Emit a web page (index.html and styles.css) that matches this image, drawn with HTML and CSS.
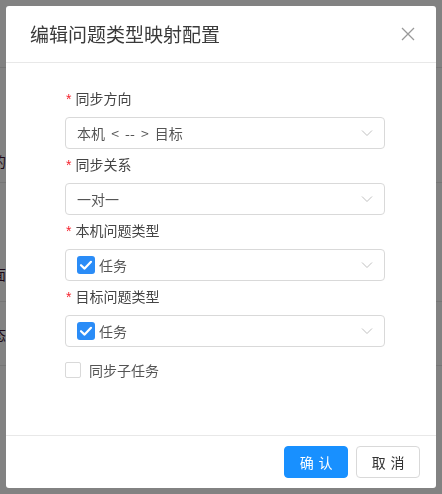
FILE: index.html
```html
<!DOCTYPE html>
<html lang="zh-CN">
<head>
<meta charset="utf-8">
<title>编辑问题类型映射配置</title>
<link rel="stylesheet" href="styles.css">
</head>
<body>
<div class="page">
  <div class="row r1"></div>
  <div class="row r2"><span class="cell">同步的</span></div>
  <div class="row r3"><span class="cell">页面</span></div>
  <div class="row r4"><span class="cell">状态</span></div>
  <div class="row r5"></div>
</div>
<div class="mask">
  <div class="modal">
    <div class="modal-header">
      <div class="title">编辑问题类型映射配置</div>
      <button class="close" type="button" aria-label="关闭">
        <svg width="14" height="14" viewBox="0 0 14 14"><path d="M1 1 L13 13 M13 1 L1 13" stroke="#999" stroke-width="1.3" fill="none"/></svg>
      </button>
    </div>
    <div class="modal-body">
      <div class="form">
        <div class="item">
          <div class="label required">同步方向</div>
          <div class="select">
            <span class="value spaced">本机 &lt; -- &gt; 目标</span>
            <svg class="arrow" width="12" height="8" viewBox="0 0 12 8"><path d="M1 1.5 L6 6.5 L11 1.5" stroke="#bfbfbf" stroke-width="1" fill="none"/></svg>
          </div>
        </div>
        <div class="item">
          <div class="label required">同步关系</div>
          <div class="select">
            <span class="value">一对一</span>
            <svg class="arrow" width="12" height="8" viewBox="0 0 12 8"><path d="M1 1.5 L6 6.5 L11 1.5" stroke="#bfbfbf" stroke-width="1" fill="none"/></svg>
          </div>
        </div>
        <div class="item">
          <div class="label required">本机问题类型</div>
          <div class="select">
            <span class="value tag"><span class="tick"><svg width="18" height="18" viewBox="0 0 18 18"><path d="M4 9.2 L7.6 12.6 L14 5.8" stroke="#fff" stroke-width="2.2" fill="none" stroke-linecap="round" stroke-linejoin="round"/></svg></span>任务</span>
            <svg class="arrow" width="12" height="8" viewBox="0 0 12 8"><path d="M1 1.5 L6 6.5 L11 1.5" stroke="#bfbfbf" stroke-width="1" fill="none"/></svg>
          </div>
        </div>
        <div class="item">
          <div class="label required">目标问题类型</div>
          <div class="select">
            <span class="value tag"><span class="tick"><svg width="18" height="18" viewBox="0 0 18 18"><path d="M4 9.2 L7.6 12.6 L14 5.8" stroke="#fff" stroke-width="2.2" fill="none" stroke-linecap="round" stroke-linejoin="round"/></svg></span>任务</span>
            <svg class="arrow" width="12" height="8" viewBox="0 0 12 8"><path d="M1 1.5 L6 6.5 L11 1.5" stroke="#bfbfbf" stroke-width="1" fill="none"/></svg>
          </div>
        </div>
        <label class="check"><span class="box"></span><span class="check-text">同步子任务</span></label>
      </div>
    </div>
    <div class="modal-footer">
      <button class="btn primary" type="button">确<span class="sp">认</span></button>
      <button class="btn" type="button">取<span class="sp">消</span></button>
    </div>
  </div>
</div>
</body>
</html>
```
FILE: styles.css
```css
* { box-sizing: border-box; }
html, body { margin: 0; padding: 0; }
body {
  background: #fff;
  font-family: "Noto Sans CJK SC", "Noto Sans", sans-serif;
  font-size: 14px;
  color: #333;
  width: 442px;
  height: 494px;
  overflow: hidden;
}
.page { display: flex; flex-direction: column; }
.row { border-bottom: 1px solid #e8e8e8; display: flex; align-items: center; }
.r1 { height: 68px; }
.r2 { height: 115px; align-items: flex-end; padding-bottom: 10px; }
.r3 { height: 119px; align-items: flex-end; padding-bottom: 16px; }
.r4 { height: 64px; }
.r5 { height: 128px; border-bottom: none; }
.cell {
  width: 6px;
  overflow: hidden;
  white-space: nowrap;
  display: flex;
  justify-content: flex-end;
  color: #3a1030;
  font-size: 14px;
  line-height: 22px;
}
.mask {
  position: fixed;
  inset: 0;
  background: rgba(0, 0, 0, 0.49);
  display: flex;
  padding: 6px;
}
.modal {
  flex: 1;
  background: #fff;
  border-radius: 3px;
  display: flex;
  flex-direction: column;
  overflow: hidden;
}
.modal-header {
  height: 57px;
  border-bottom: 1px solid #e8e8e8;
  display: flex;
  align-items: center;
  justify-content: space-between;
  padding: 0 21px 1px 24px;
}
.title {
  font-size: 19px;
  color: #3a3a3a;
  line-height: 28px;
}
.close {
  border: none;
  background: none;
  padding: 0;
  width: 14px;
  height: 14px;
  display: flex;
}
.modal-body {
  flex: 1;
  padding: 24px 0 0 59px;
}
.form { width: 320px; display: flex; flex-direction: column; }
.item { display: flex; flex-direction: column; margin-bottom: 2px; }
.label {
  line-height: 22px;
  height: 22px;
  margin-top: 2px;
  margin-bottom: 8px;
  color: #444;
}
.item:first-child .label { margin-top: 0; }
.label.required::before {
  content: "*";
  color: #f5222d;
  font-family: "Liberation Sans", sans-serif;
  font-size: 14px;
  margin-right: 4px;
  margin-left: 1px;
}
.select {
  height: 32px;
  border: 1px solid #d9d9d9;
  border-radius: 4px;
  display: flex;
  align-items: center;
  justify-content: space-between;
  padding: 0 11px 0 11px;
}
.value { color: #555; line-height: 22px; }
.value.spaced { word-spacing: 3px; }
.tag { display: flex; align-items: center; gap: 4px; }
.tick {
  width: 18px;
  height: 18px;
  background: #2a8cf7;
  border-radius: 3px;
  display: flex;
}
.arrow { display: block; }
.check {
  margin-top: 9px;
  height: 24px;
  display: flex;
  align-items: center;
  gap: 8px;
  color: #555;
}
.box {
  width: 16px;
  height: 16px;
  border: 1px solid #d9d9d9;
  border-radius: 2px;
  background: #fff;
}
.check-text { margin-left: 0; }
.modal-footer {
  border-top: 1px solid #e8e8e8;
  padding: 10px 16px;
  display: flex;
  justify-content: flex-end;
  gap: 8px;
}
.btn {
  height: 32px;
  width: 64px;
  border: 1px solid #d9d9d9;
  border-radius: 4px;
  background: #fff;
  color: #333;
  font-family: "Noto Sans CJK SC", "Noto Sans", sans-serif;
  font-size: 14px;
  padding: 0;
  display: flex;
  align-items: center;
  justify-content: center;
}
.btn .sp { margin-left: 0.34em; }
.btn.primary {
  background: #1890ff;
  border-color: #1890ff;
  color: #fff;
}
```
